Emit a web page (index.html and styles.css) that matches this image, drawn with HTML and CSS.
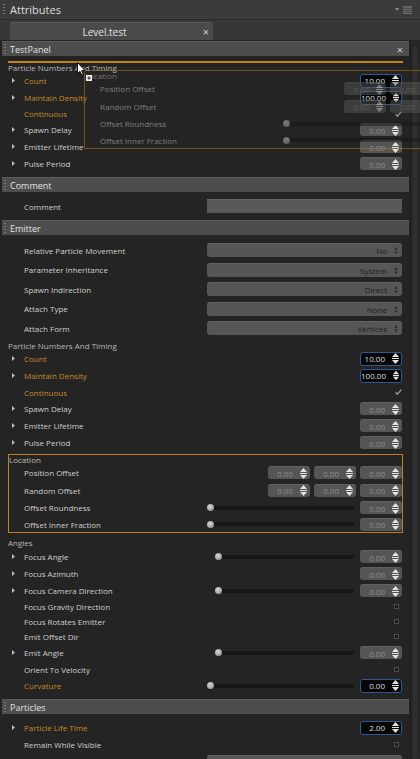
FILE: index.html
```html
<!DOCTYPE html>
<html lang="en">
<head>
<meta charset="utf-8">
<title>Attributes</title>
<link rel="stylesheet" href="styles.css">
</head>
<body>
<svg class="defs" aria-hidden="true">
  <symbol id="spin" viewBox="0 0 7 11"><path d="M3.5 0L7 4H0Z M0 5H7V6H0Z M0 7H7L3.5 11Z"/></symbol>
  <symbol id="ud" viewBox="0 0 4 8"><path d="M2 0L4 3H0Z M0 5H4L2 8Z"/></symbol>
  <symbol id="tri" viewBox="0 0 3 5"><path d="M0 0L3 2.5L0 5Z"/></symbol>
  <symbol id="tick" viewBox="0 0 8 7"><path d="M0.6 3.6L2.7 6.1L7.4 0.7" fill="none" stroke-width="1.5"/></symbol>
</svg>
<div class="app">
  <div class="titlebar">
    <span class="grip"></span>
    <span class="title">Attributes</span>
    <span class="tb-icons">
      <svg class="tb-tri" viewBox="0 0 4 3"><path d="M0 0H4L2 3Z"/></svg>
      <svg class="tb-menu" viewBox="0 0 9 8"><rect x="0" y="0" width="9" height="8" fill="#6c6c6c"/><rect x="0" y="1.8" width="9" height="0.8" fill="#3b3b3b"/><rect x="0" y="3.8" width="9" height="0.8" fill="#3b3b3b"/><rect x="0" y="5.8" width="9" height="0.8" fill="#3b3b3b"/></svg>
    </span>
  </div>
  <div class="tabbar">
    <div class="tab"><span class="tab-label">Level.test</span><span class="tab-x">×</span></div>
  </div>
  <div class="main">
    <div class="content">
      <div class="phead first"><span class="grip"></span><span class="ptitle">TestPanel</span><span class="px">×</span></div>
      <div class="drop-line"></div>
      <div class="glabel">Particle Numbers And Timing</div>
      <div class="row"><span class="exp"><svg class="tri"><use href="#tri"/></svg></span><span class="lbl hl">Count</span><span class="num act"><span>10.00</span><svg class="spin"><use href="#spin"/></svg></span></div>
      <div class="row"><span class="exp"><svg class="tri"><use href="#tri"/></svg></span><span class="lbl hl">Maintain Density</span><span class="num act"><span>100.00</span><svg class="spin"><use href="#spin"/></svg></span></div>
      <div class="row check15"><span class="exp"></span><span class="lbl hl">Continuous</span><svg class="tick"><use href="#tick"/></svg></div>
      <div class="row"><span class="exp"><svg class="tri"><use href="#tri"/></svg></span><span class="lbl">Spawn Delay</span><span class="num"><span>0.00</span><svg class="spin"><use href="#spin"/></svg></span></div>
      <div class="row"><span class="exp"><svg class="tri"><use href="#tri"/></svg></span><span class="lbl">Emitter Lifetime</span><span class="num"><span>0.00</span><svg class="spin"><use href="#spin"/></svg></span></div>
      <div class="row"><span class="exp"><svg class="tri"><use href="#tri"/></svg></span><span class="lbl">Pulse Period</span><span class="num"><span>0.00</span><svg class="spin"><use href="#spin"/></svg></span></div>

      <div class="phead sec"><span class="grip"></span><span class="ptitle">Comment</span></div>
      <div class="row comment-row"><span class="exp"></span><span class="lbl">Comment</span><span class="txt"></span></div>

      <div class="phead sec"><span class="grip"></span><span class="ptitle">Emitter</span></div>
      <div class="dd-list">
        <div class="row dd-row"><span class="exp"></span><span class="lbl">Relative Particle Movement</span><span class="dd"><span>No</span><svg class="ud"><use href="#ud"/></svg></span></div>
        <div class="row dd-row short"><span class="exp"></span><span class="lbl">Parameter Inheritance</span><span class="dd"><span>System</span><svg class="ud"><use href="#ud"/></svg></span></div>
        <div class="row dd-row"><span class="exp"></span><span class="lbl">Spawn Indirection</span><span class="dd"><span>Direct</span><svg class="ud"><use href="#ud"/></svg></span></div>
        <div class="row dd-row short"><span class="exp"></span><span class="lbl">Attach Type</span><span class="dd"><span>None</span><svg class="ud"><use href="#ud"/></svg></span></div>
        <div class="row dd-row"><span class="exp"></span><span class="lbl">Attach Form</span><span class="dd"><span>Vertices</span><svg class="ud"><use href="#ud"/></svg></span></div>
      </div>
      <div class="glabel g2">Particle Numbers And Timing</div>
      <div class="row"><span class="exp"><svg class="tri"><use href="#tri"/></svg></span><span class="lbl hl">Count</span><span class="num act"><span>10.00</span><svg class="spin"><use href="#spin"/></svg></span></div>
      <div class="row"><span class="exp"><svg class="tri"><use href="#tri"/></svg></span><span class="lbl hl">Maintain Density</span><span class="num act"><span>100.00</span><svg class="spin"><use href="#spin"/></svg></span></div>
      <div class="row check16"><span class="exp"></span><span class="lbl hl">Continuous</span><svg class="tick"><use href="#tick"/></svg></div>
      <div class="row"><span class="exp"><svg class="tri"><use href="#tri"/></svg></span><span class="lbl">Spawn Delay</span><span class="num"><span>0.00</span><svg class="spin"><use href="#spin"/></svg></span></div>
      <div class="row"><span class="exp"><svg class="tri"><use href="#tri"/></svg></span><span class="lbl">Emitter Lifetime</span><span class="num"><span>0.00</span><svg class="spin"><use href="#spin"/></svg></span></div>
      <div class="row"><span class="exp"><svg class="tri"><use href="#tri"/></svg></span><span class="lbl">Pulse Period</span><span class="num"><span>0.00</span><svg class="spin"><use href="#spin"/></svg></span></div>

      <div class="locbox">
        <div class="loclabel">Location</div>
        <div class="row"><span class="exp"></span><span class="lbl">Position Offset</span><span class="trio"><span class="num"><span>0.00</span><svg class="spin"><use href="#spin"/></svg></span><span class="num"><span>0.00</span><svg class="spin"><use href="#spin"/></svg></span><span class="num"><span>0.00</span><svg class="spin"><use href="#spin"/></svg></span></span></div>
        <div class="row r18"><span class="exp"></span><span class="lbl">Random Offset</span><span class="trio"><span class="num"><span>0.00</span><svg class="spin"><use href="#spin"/></svg></span><span class="num"><span>0.00</span><svg class="spin"><use href="#spin"/></svg></span><span class="num"><span>0.00</span><svg class="spin"><use href="#spin"/></svg></span></span></div>
        <div class="row"><span class="exp"></span><span class="lbl">Offset Roundness</span><span class="ctrl"><span class="slider wide"><span class="track"></span><span class="thumb"></span></span><span class="num"><span>0.00</span><svg class="spin"><use href="#spin"/></svg></span></span></div>
        <div class="row r16"><span class="exp"></span><span class="lbl">Offset Inner Fraction</span><span class="ctrl"><span class="slider wide"><span class="track"></span><span class="thumb"></span></span><span class="num"><span>0.00</span><svg class="spin"><use href="#spin"/></svg></span></span></div>
      </div>

      <div class="glabel g3">Angles</div>
      <div class="row"><span class="exp"><svg class="tri"><use href="#tri"/></svg></span><span class="lbl">Focus Angle</span><span class="ctrl"><span class="slider narrow"><span class="track"></span><span class="thumb"></span></span><span class="num"><span>0.00</span><svg class="spin"><use href="#spin"/></svg></span></span></div>
      <div class="row"><span class="exp"><svg class="tri"><use href="#tri"/></svg></span><span class="lbl">Focus Azimuth</span><span class="num"><span>0.00</span><svg class="spin"><use href="#spin"/></svg></span></div>
      <div class="row"><span class="exp"><svg class="tri"><use href="#tri"/></svg></span><span class="lbl">Focus Camera Direction</span><span class="ctrl"><span class="slider narrow"><span class="track"></span><span class="thumb"></span></span><span class="num"><span>0.00</span><svg class="spin"><use href="#spin"/></svg></span></span></div>
      <div class="row check15"><span class="exp"></span><span class="lbl">Focus Gravity Direction</span><span class="chk"></span></div>
      <div class="row check15"><span class="exp"></span><span class="lbl">Focus Rotates Emitter</span><span class="chk"></span></div>
      <div class="row check15"><span class="exp"></span><span class="lbl">Emit Offset Dir</span><span class="chk"></span></div>
      <div class="row"><span class="exp"><svg class="tri"><use href="#tri"/></svg></span><span class="lbl">Emit Angle</span><span class="ctrl"><span class="slider narrow"><span class="track"></span><span class="thumb"></span></span><span class="num"><span>0.00</span><svg class="spin"><use href="#spin"/></svg></span></span></div>
      <div class="row check16"><span class="exp"></span><span class="lbl">Orient To Velocity</span><span class="chk"></span></div>
      <div class="row"><span class="exp"></span><span class="lbl hl">Curvature</span><span class="ctrl"><span class="slider wide"><span class="track"></span><span class="thumb"></span></span><span class="num act"><span>0.00</span><svg class="spin"><use href="#spin"/></svg></span></span></div>

      <div class="phead sec last"><span class="grip"></span><span class="ptitle">Particles</span></div>
      <div class="row plt"><span class="exp"><svg class="tri"><use href="#tri"/></svg></span><span class="lbl hl">Particle Life Time</span><span class="num act"><span>2.00</span><svg class="spin"><use href="#spin"/></svg></span></div>
      <div class="row check16"><span class="exp"></span><span class="lbl">Remain While Visible</span><span class="chk"></span></div>
      <div class="row dd-row"><span class="exp"></span><span class="lbl"></span><span class="dd"><span></span></span></div>
    </div>
    <div class="scroll"><div class="scroll-thumb"></div></div>
  </div>

  <div class="locbox ghost" aria-hidden="true">
    <div class="loclabel">Location</div>
    <div class="row"><span class="exp"></span><span class="lbl">Position Offset</span><span class="trio"><span class="num"><span>0.00</span><svg class="spin"><use href="#spin"/></svg></span><span class="num"><span>0.00</span><svg class="spin"><use href="#spin"/></svg></span><span class="num"><span>0.00</span><svg class="spin"><use href="#spin"/></svg></span></span></div>
    <div class="row r18"><span class="exp"></span><span class="lbl">Random Offset</span><span class="trio"><span class="num"><span>0.00</span><svg class="spin"><use href="#spin"/></svg></span><span class="num"><span>0.00</span><svg class="spin"><use href="#spin"/></svg></span><span class="num"><span>0.00</span><svg class="spin"><use href="#spin"/></svg></span></span></div>
    <div class="row"><span class="exp"></span><span class="lbl">Offset Roundness</span><span class="ctrl"><span class="slider wide"><span class="track"></span><span class="thumb"></span></span><span class="num"><span>0.00</span><svg class="spin"><use href="#spin"/></svg></span></span></div>
    <div class="row r16"><span class="exp"></span><span class="lbl">Offset Inner Fraction</span><span class="ctrl"><span class="slider wide"><span class="track"></span><span class="thumb"></span></span><span class="num"><span>0.00</span><svg class="spin"><use href="#spin"/></svg></span></span></div>
  </div>

  <svg class="drag-plus" viewBox="0 0 6 6" aria-hidden="true"><rect x="0" y="0" width="6" height="6" fill="#f2f2f2"/><path d="M3 1.3V4.7M1.3 3H4.7" stroke="#222" stroke-width="1"/></svg>
  <svg class="cursor" viewBox="0 0 9 14" aria-hidden="true"><path d="M0.5 0.5V11.5L3 9.2L4.8 13.2L6.4 12.5L4.7 8.6H8Z" fill="#fff" stroke="#000" stroke-width="0.9" stroke-linejoin="round"/></svg>
</div>
</body>
</html>
```

FILE: styles.css
```css
* { box-sizing: border-box; }
html, body { margin: 0; padding: 0; background: #242424; }
body {
  font-family: "Open Sans", "Noto Sans", sans-serif;
  font-size: 8px;
  color: #cdcdcd;
}
.defs { width: 0; height: 0; position: absolute; }

.app {
  position: relative;
  width: 420px;
  height: 759px;
  overflow: hidden;
  background: #242424;
  display: flex;
  flex-direction: column;
}

/* title bar */
.titlebar {
  flex: none;
  height: 20px;
  background: #3b3b3b;
  border-bottom: 1px solid #2b2b2b;
  display: flex;
  align-items: center;
}
.grip {
  flex: none;
  width: 2px;
  height: 11px;
  margin-left: 3px;
  background: repeating-linear-gradient(to bottom, #7a7a7a 0 1px, transparent 1px 3px);
}
.title {
  flex: 1;
  margin-left: 5px;
  font-size: 11px;
  color: #dcdcdc;
}
.tb-icons { display: flex; align-items: center; gap: 4px; margin-right: 8px; }
.tb-tri { width: 4px; height: 3px; fill: #8a8a8a; }
.tb-menu { width: 9px; height: 8px; }

/* tab bar */
.tabbar {
  flex: none;
  height: 20px;
  background: #373737;
  padding: 2px 0 0 10px;
  display: flex;
}
.tab {
  width: 203px;
  height: 18px;
  background: #4a4a4a;
  border-top: 1px solid #5a5a5a;
  border-radius: 2px 2px 0 0;
  display: flex;
  align-items: center;
}
.tab-label { flex: 1; text-align: center; font-size: 10px; color: #e0e0e0; }
.tab-x { width: 14px; font-size: 11px; color: #cfcfcf; text-align: center; }

/* main */
.main { flex: 1; display: flex; min-height: 0; }
.content { width: 410px; flex: none; }
.scroll {
  flex: 1;
  background: #272727;
  border-left: 1px solid #1c1c1c;
  padding: 6px 0 0 2px;
}
.scroll-thumb { width: 4px; height: 100%; background: #2f2f2f; border-radius: 2px; }

/* panel headers */
.phead {
  height: 15px;
  margin: 0 1px 0 2px;
  background: #4d4d4d;
  border-top: 1px solid #5c5c5c;
  display: flex;
  align-items: center;
}
.phead .grip { margin-left: 2px; height: 10px; }
.phead.first { margin-top: 1px; }
.phead.sec { margin-top: 5px; }
.comment-row + .phead.sec { margin-top: 5px; }
.phead.last { margin-top: 5px; }
.ptitle { flex: 1; margin-left: 4px; font-size: 9px; color: #e2e2e2; }
.px { width: 18px; font-size: 11px; color: #d0d0d0; text-align: center; }

.drop-line {
  height: 2px;
  margin: 5px 7px 0 8px;
  background: #c4801a;
}
.glabel {
  height: 9px;
  line-height: 9px;
  padding-left: 8px;
  color: #b8b8b8;
  white-space: nowrap;
}
.glabel.g2 { margin-top: 3px; }
.glabel.g3 { margin-top: 5px; height: 10px; line-height: 10px; }

/* rows */
.row {
  height: 17px;
  display: flex;
  align-items: center;
  padding: 0 8px 0 10px;
}
.row.check15 { height: 15px; }
.row.check16 { height: 16px; }
.row.r18 { height: 18px; }
.row.r16 { height: 16px; }
.row.dd-row { height: 20px; }
.row.dd-row.short { height: 19px; }
.row.plt { margin-top: 5px; }
.comment-row { height: 18px; margin-top: 5px; }
.dd-list { padding-top: 5px; }

.exp { flex: none; width: 14px; display: flex; align-items: center; padding-left: 2px; }
.tri { width: 3px; height: 5px; fill: #bdbdbd; }
.lbl { flex: 1; white-space: nowrap; color: #cfcfcf; }
.lbl.hl { color: #c98a24; }

/* number fields */
.num {
  flex: none;
  width: 42px;
  height: 13px;
  border-radius: 3px;
  background: #555555;
  border-top: 1px solid #606060;
  color: #8e8e8e;
  display: flex;
  align-items: center;
  justify-content: flex-end;
  gap: 7px;
  padding-right: 3px;
}
.num.act {
  height: 14px;
  background: #060606;
  border: 1px solid #2d5a95;
  color: #dcdcdc;
  padding-right: 2px;
}
.spin { width: 7px; height: 11px; fill: #e2e2e2; }
.trio { display: flex; gap: 4px; }
.ctrl { display: flex; align-items: center; gap: 6px; }

/* sliders */
.slider { display: grid; align-items: center; height: 8px; }
.slider > * { grid-area: 1 / 1; }
.slider.wide { width: 147px; }
.slider.narrow { width: 139px; }
.track { height: 4px; margin-left: 3px; background: #161616; border-radius: 2px; }
.thumb {
  justify-self: start;
  width: 7px;
  height: 7px;
  border-radius: 50%;
  background: radial-gradient(circle at 40% 35%, #d6d6d6, #858585);
}

/* dropdowns and inputs */
.dd {
  flex: none;
  width: 195px;
  height: 14px;
  border-radius: 3px;
  background: #565656;
  border-top: 1px solid #626262;
  color: #1e1e1e;
  display: flex;
  align-items: center;
  justify-content: flex-end;
  gap: 7px;
  padding-right: 4px;
}
.ud { width: 4px; height: 7px; fill: #2a2a2a; }
.txt {
  flex: none;
  width: 195px;
  height: 14px;
  background: #585858;
  border-top: 1px solid #666;
}

.chk {
  flex: none;
  width: 5px;
  height: 5px;
  margin-right: 3px;
  border: 1px solid #4d4d4d;
  background: #1b1b1b;
}
.tick { width: 7px; height: 6px; stroke: #9a9a9a; margin-right: 0; }

/* location box */
.locbox {
  margin: 3px 7px 0 8px;
  border: 1px solid #c17f1e;
}
.locbox .row { padding: 0 0 0 1px; }
.loclabel { height: 9px; line-height: 9px; color: #bdbdbd; }

/* drag ghost overlay */
.locbox.ghost {
  position: absolute;
  left: 84px;
  top: 70px;
  width: 395px;
  margin: 0;
  opacity: 0.5;
}
.drag-plus { position: absolute; left: 86px; top: 75px; width: 6px; height: 6px; }
.cursor { position: absolute; left: 77px; top: 62px; width: 9px; height: 14px; }
```
